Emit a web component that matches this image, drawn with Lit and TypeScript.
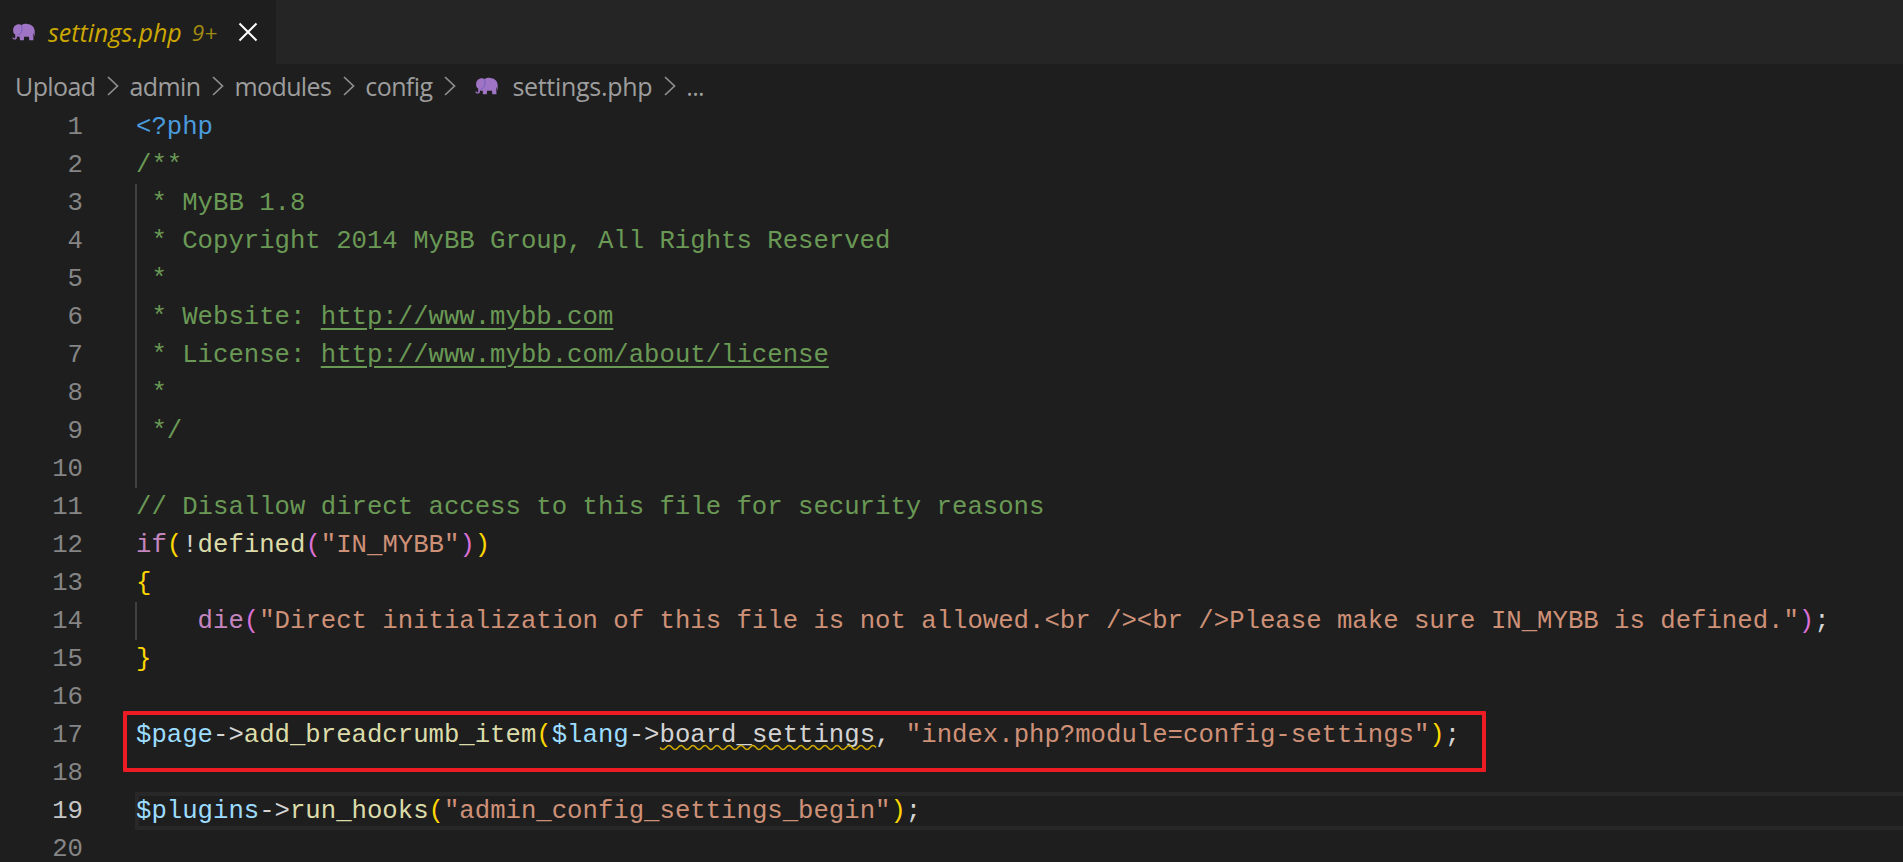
import { LitElement, html, css, svg } from "lit";
import { customElement } from "lit/decorators.js";

type Seg = [string, string];
const C = "c", S = "s", F = "f", V = "v", O = "o", K = "k", Y = "y", P = "p", T = "t", L = "l", W = "w";

const lines: { segs: Seg[]; guide?: boolean; active?: boolean }[] = [
  { segs: [["<?php", T]] },
  { segs: [["/**", C]] },
  { segs: [[" * MyBB 1.8", C]], guide: true },
  { segs: [[" * Copyright 2014 MyBB Group, All Rights Reserved", C]], guide: true },
  { segs: [[" *", C]], guide: true },
  { segs: [[" * Website: ", C], ["http://www.mybb.com", L]], guide: true },
  { segs: [[" * License: ", C], ["http://www.mybb.com/about/license", L]], guide: true },
  { segs: [[" *", C]], guide: true },
  { segs: [[" */", C]], guide: true },
  { segs: [], guide: true },
  { segs: [["// Disallow direct access to this file for security reasons", C]] },
  { segs: [["if", K], ["(", Y], ["!", O], ["defined", F], ["(", P], ['"IN_MYBB"', S], [")", P], [")", Y]] },
  { segs: [["{", Y]] },
  { segs: [["    ", O], ["die", K], ["(", P], ['"Direct initialization of this file is not allowed.<br /><br />Please make sure IN_MYBB is defined."', S], [")", P], [";", O]], guide: true },
  { segs: [["}", Y]] },
  { segs: [] },
  { segs: [["$page", V], ["->", O], ["add_breadcrumb_item", F], ["(", Y], ["$lang", V], ["->", O], ["board_settings", W], [", ", O], ['"index.php?module=config-settings"', S], [")", Y], [";", O]] },
  { segs: [] },
  { segs: [["$plugins", V], ["->", O], ["run_hooks", F], ["(", Y], ['"admin_config_settings_begin"', S], [")", Y], [";", O]], active: true },
  { segs: [] },
];

const elephant = html`<svg class="ele" viewBox="0 0 24 17" aria-hidden="true">
  <path fill="#a074c4" d="M3 7C3 3 5.500 1 8.500 1C9.500 1 10.300 1.300 11 1.800C12.500 .9 14.500 .6 16.500 .7C20.500 .9 23.500 3.200 23.700 7.500C23.800 9.500 23.700 11 23.500 12L23 12L23 9.500L22.400 11L22.500 16.500L18.500 16.500L18.200 13L13.500 13L13.300 16.500L9.500 16.500L9.300 13C8.300 13.300 7.300 13.100 6.700 12.500L6.600 14C6.600 15.300 5.300 16 4 15.700C3 15.400 2.300 14.700 2.200 13.800L3.300 13.800C3.500 14.400 4 14.700 4.500 14.500C5 14.300 5 13.800 5 13.200L5 10.800C3.800 10.500 3 9.200 3 7Z"/>
  <path fill="none" stroke="#6a5cc0" stroke-width=".8" d="M11 2C11.800 4 11.800 7.500 10.500 9.500C9.800 10.500 8.800 11 7.800 11"/>
</svg>`;

const chevron = html`<svg class="chev" viewBox="0 0 16 24" aria-hidden="true"><path d="M3 3L12.500 12L3 21" fill="none" stroke="#8f8f8f" stroke-width="1.700"/></svg>`;

const waveD = "M0 1.500" + Array.from({ length: 18 }, () => "q3 4 6 0t6 0").join("");
const squiggle = html`<svg class="sq" viewBox="0 0 216 6" aria-hidden="true">${svg`<path d=${waveD} fill="none" stroke="#cca700" stroke-width="1.500"/>`}</svg>`;

@customElement("app-root")
export class AppRoot extends LitElement {
  static styles = css`
    :host { display: block; width: 1903px; height: 862px; overflow: hidden; background: #1e1e1e; position: relative; font-family: "Open Sans", "Liberation Sans", sans-serif; }
    .tabs { display: flex; height: 64px; background: #252526; }
    .tab { display: flex; align-items: center; width: 276px; background: #1e1e1e; padding-left: 10px; box-sizing: border-box; }
    .ele { width: 25px; height: 18px; flex: none; }
    .name { font-style: italic; font-size: 25px; color: #cca700; margin-left: 13px; }
    .count { font-style: italic; font-size: 22.500px; color: #a08a12; margin-left: 10px; }
    .close { width: 20px; height: 20px; margin-left: 21px; flex: none; }
    .crumbs { display: flex; align-items: center; height: 44px; padding-left: 15px; font-size: 25px; color: #9d9d9d; letter-spacing: -0.600px; }
    .crumbs span { white-space: pre; }
    .crumbs .file { letter-spacing: -0.300px; }
    .chev { width: 16px; height: 24px; margin: 0 8px 0 10px; flex: none; }
    .crumbs .ele { margin: 0 14px 0 7px; }
    .line { display: flex; height: 38px; line-height: 40px; font-family: "Liberation Mono", monospace; font-size: 25.660px; white-space: pre; }
    .num { width: 83px; flex: none; text-align: right; color: #858585; }
    .num.on { color: #c6c6c6; }
    .code { margin-left: 52px; padding-left: 1px; flex: 1; min-width: 0; position: relative; }
    .code.guide { box-shadow: inset 2px 0 #404040; }
    .code.active { box-shadow: inset 4px 4px #282828, inset 0 -4px #282828; }
    .c { color: #6a9955; }
    .l { color: #6a9955; text-decoration: underline; text-underline-offset: 4px; text-decoration-thickness: 2px; }
    .s { color: #ce9178; }
    .f { color: #dcdcaa; }
    .v { color: #9cdcfe; }
    .o { color: #d4d4d4; }
    .k { color: #c586c0; }
    .y { color: #ffd700; }
    .p { color: #da70d6; }
    .t { color: #4a9bdc; }
    .w { color: #d4d4d4; position: relative; }
    .sq { position: absolute; left: 0; top: 25px; width: 216px; height: 6px; overflow: visible; }
    .mark { position: absolute; left: 123px; top: 711px; width: 1363px; height: 61px; box-sizing: border-box; border: 4px solid #ed1c24; border-radius: 1px; pointer-events: none; }
  `;

  render() {
    return html`
      <div class="tabs">
        <div class="tab">
          ${elephant}
          <span class="name">settings.php</span>
          <span class="count">9+</span>
          <svg class="close" viewBox="0 0 20 20" aria-hidden="true"><path d="M1.500 1.500L18.500 18.500M18.500 1.500L1.500 18.500" stroke="#fff" stroke-width="2" fill="none"/></svg>
        </div>
      </div>
      <div class="crumbs">
        <span>Upload</span>${chevron}<span>admin</span>${chevron}<span>modules</span>${chevron}<span>config</span>${chevron}${elephant}<span class="file">settings.php</span>${chevron}<span>...</span>
      </div>
      ${lines.map((l, i) => html`<div class="line">
        <div class="num ${l.active ? "on" : ""}">${i + 1}</div>
        <div class="code ${l.guide ? "guide" : ""} ${l.active ? "active" : ""}">${l.segs.map(([t, c]) => html`<span class=${c}>${t}${c === W ? squiggle : ""}</span>`)}</div>
      </div>`)}
      <div class="mark"></div>
    `;
  }
}
